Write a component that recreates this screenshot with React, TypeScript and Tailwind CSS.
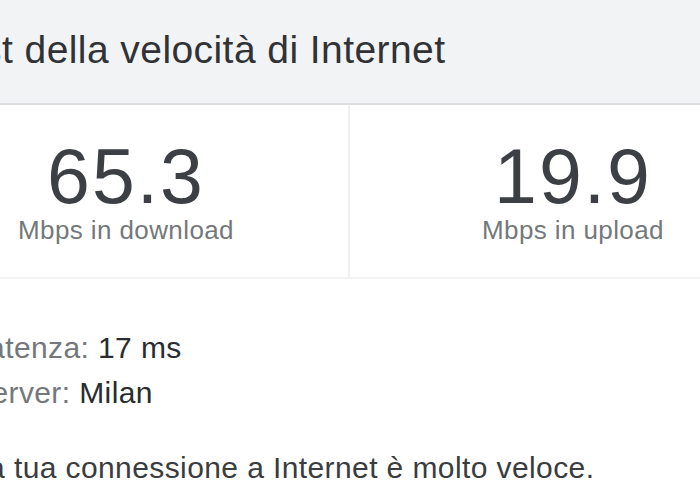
export default function App() {
  return (
    <div className="w-[700px] h-[500px] overflow-hidden bg-white" style={{ fontFamily: '"Liberation Sans", Arial, sans-serif' }}>
      <div className="ml-[-96px] w-[892px]">
        <div className="h-[105px] bg-[#f2f3f5] pl-[36px] pt-[30px] border-b-2 border-[#dcdee2]">
          <div className="text-[39px] leading-[39px] tracking-[0.43px] text-[#303236] whitespace-nowrap">
            Test della velocità di Internet
          </div>
        </div>
        <div className="grid grid-cols-2 border-b-2 border-[#f2f2f2]">
          <div className="flex flex-col items-center pt-[32px] pb-[34px] border-r-2 border-[#efefef]">
            <div className="text-[77px] leading-[78px] tracking-[2px] text-[#3c3f43]">65.3</div>
            <div className="mt-[2px] text-[26px] leading-[26px] tracking-[0.4px] text-[#74787c]">Mbps in download</div>
          </div>
          <div className="flex flex-col items-center pt-[32px] pb-[34px]">
            <div className="text-[77px] leading-[78px] tracking-[2px] text-[#3c3f43]">19.9</div>
            <div className="mt-[2px] text-[26px] leading-[26px] tracking-[0.4px] text-[#74787c]">Mbps in upload</div>
          </div>
        </div>
        <div className="pl-[67px] pt-[46px] text-[30px] tracking-[0.4px]">
          <div className="leading-[45px] whitespace-nowrap">
            <span className="text-[#74787c]">Latenza: </span>
            <span className="text-[#2a2c2f]">17 ms</span>
          </div>
          <div className="leading-[45px] whitespace-nowrap">
            <span className="text-[#74787c]">Server: </span>
            <span className="text-[#2a2c2f]">Milan</span>
          </div>
          <div className="mt-[30px] leading-[45px] whitespace-nowrap text-[#3a3c40]">
            La tua connessione a Internet è molto veloce.
          </div>
        </div>
      </div>
    </div>
  );
}
